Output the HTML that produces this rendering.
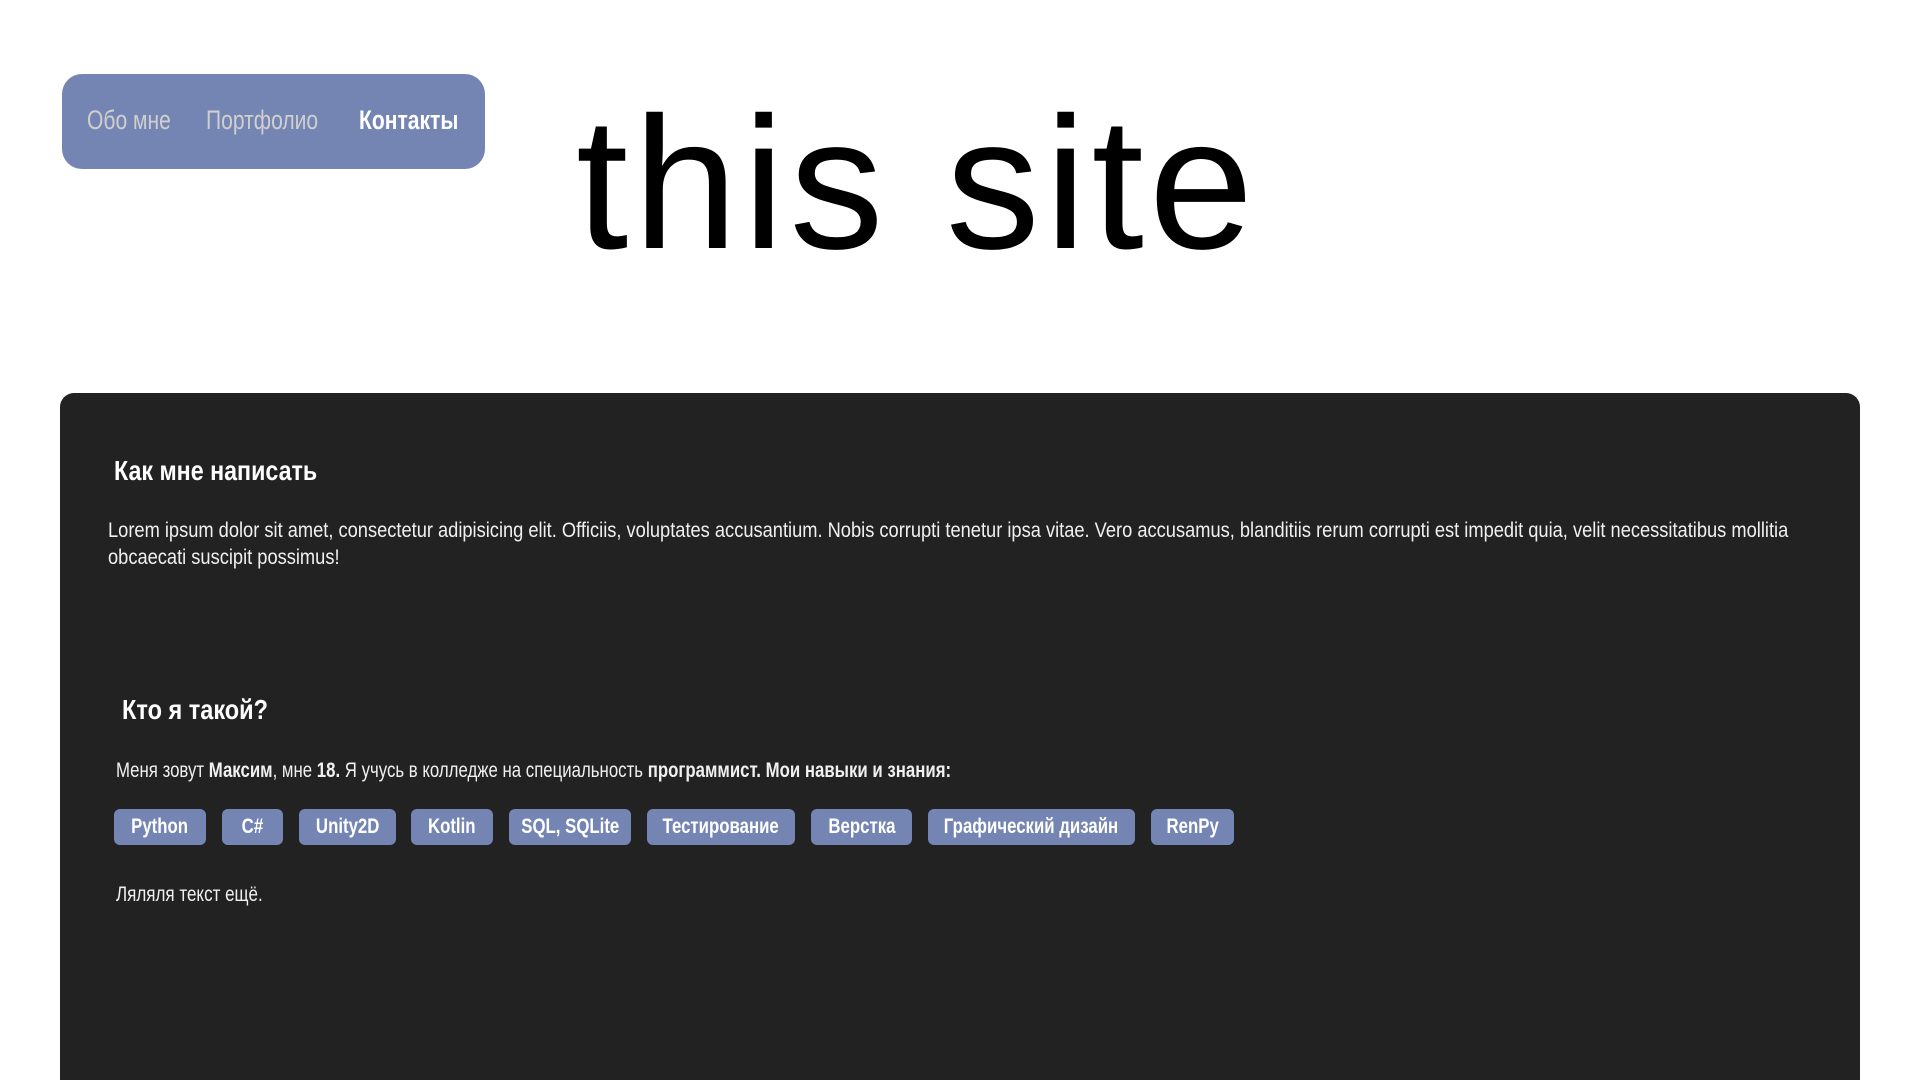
<!DOCTYPE html>
<html><head><meta charset="utf-8"><style>
*{margin:0;padding:0;box-sizing:border-box}
html,body{width:1920px;height:1080px;overflow:hidden}
body{background:#fff;position:relative;font-family:"Liberation Sans",sans-serif}
.nav{position:absolute;left:62px;top:74px;width:423px;height:95px;background:#7585b3;border-radius:20px}
.nav span{position:absolute;top:31px;font-size:27px;color:#cfcfcf;white-space:nowrap;transform:scaleX(.78);transform-origin:0 0}
.title{position:absolute;left:576px;top:75px;font-size:188px;font-weight:300;color:#000;letter-spacing:5px;white-space:nowrap}
.panel{position:absolute;left:60px;top:393px;width:1800px;height:687px;background:#222;border-radius:14px 14px 0 0;color:#fff}
.h{position:absolute;font-size:28px;font-weight:bold;white-space:nowrap;transform:scaleX(.83);transform-origin:0 0}
.p{position:absolute;font-size:21px;line-height:27px;color:#f0f0f0;white-space:nowrap;transform-origin:0 0}
.tag{position:absolute;top:416px;height:36px;background:#7585b3;border-radius:6px;font-size:21px;font-weight:bold;line-height:36px;text-align:center;color:#fff;white-space:nowrap}
.tag span{display:inline-block;transform:scaleX(.8);margin:0 -40px}
</style></head><body>
<div class="nav">
<span style="left:25px">Обо мне</span>
<span style="left:144px">Портфолио</span>
<span style="left:297px;color:#fff;font-weight:bold">Контакты</span>
</div>
<div class="title">this site</div>
<div class="panel">
<div class="h" style="left:54px;top:62px">Как мне написать</div>
<div class="p" style="left:48px;top:124px;transform:scaleX(.87)">Lorem ipsum dolor sit amet, consectetur adipisicing elit. Officiis, voluptates accusantium. Nobis corrupti tenetur ipsa vitae. Vero accusamus, blanditiis rerum corrupti est impedit quia, velit necessitatibus mollitia<br>obcaecati suscipit possimus!</div>
<div class="h" style="left:62px;top:301px;transform:scaleX(.84)">Кто я такой?</div>
<div class="p" style="left:56px;top:364px;transform:scaleX(.8)">Меня зовут <b>Максим</b>, мне <b>18.</b> Я учусь в колледже на специальность <b>программист. Мои навыки и знания:</b></div>
<div class="tag" style="left:54px;width:92px"><span>Python</span></div>
<div class="tag" style="left:162px;width:61px"><span>C#</span></div>
<div class="tag" style="left:239px;width:97px"><span>Unity2D</span></div>
<div class="tag" style="left:351px;width:82px"><span>Kotlin</span></div>
<div class="tag" style="left:449px;width:122px"><span>SQL, SQLite</span></div>
<div class="tag" style="left:587px;width:148px"><span>Тестирование</span></div>
<div class="tag" style="left:751px;width:101px"><span>Верстка</span></div>
<div class="tag" style="left:868px;width:207px"><span>Графический дизайн</span></div>
<div class="tag" style="left:1091px;width:83px"><span>RenPy</span></div>
<div class="p" style="left:56px;top:488px;transform:scaleX(.81)">Ляляля текст ещё.</div>
</div>
</body></html>
